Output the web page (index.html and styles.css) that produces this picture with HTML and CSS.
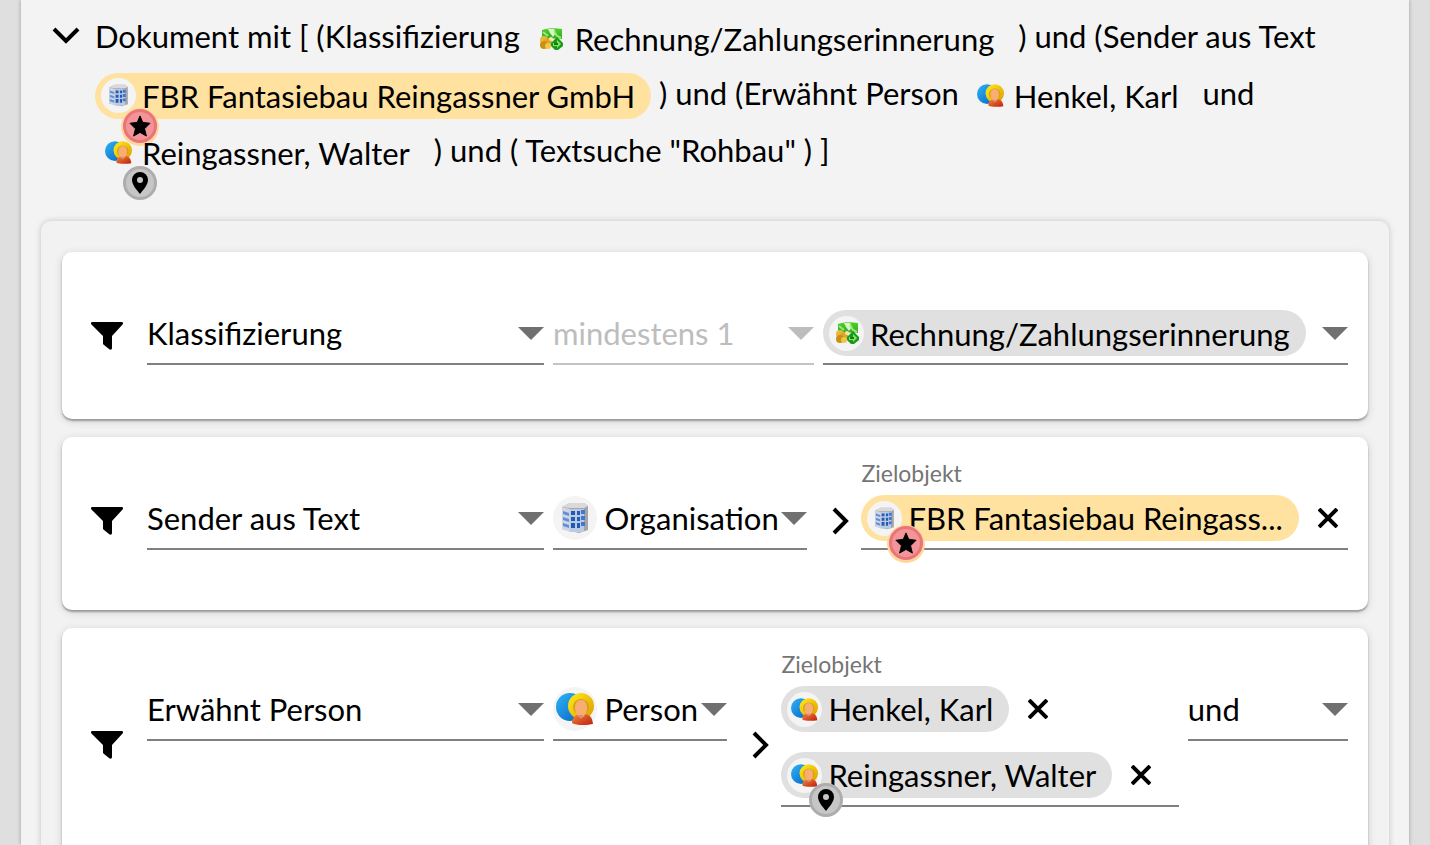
FILE: index.html
```html
<!DOCTYPE html>
<html lang="de">
  <head>
    <meta charset="UTF-8" />
    <meta name="viewport" content="width=device-width, initial-scale=1.0" />
    <title>Dokumentsuche</title>
    <link rel="stylesheet" href="styles.css">
  </head>
  <body>
    <svg class="symbols" aria-hidden="true">
      <defs>
        <linearGradient id="blue" x1="0" y1="0" x2="1" y2="1">
          <stop offset="0" stop-color="#2fb4f5" />
          <stop offset="1" stop-color="#0560c4" />
        </linearGradient>
        <linearGradient id="gold" x1="0" y1="0" x2="1" y2="1">
          <stop offset="0" stop-color="#ffee1c" />
          <stop offset="1" stop-color="#dc9a00" />
        </linearGradient>
        <linearGradient id="red" x1="0" y1="0" x2="1" y2="1">
          <stop offset="0" stop-color="#f08a3c" />
          <stop offset="1" stop-color="#c01c0c" />
        </linearGradient>
        <linearGradient id="green" x1="0" y1="0" x2="0" y2="1">
          <stop offset="0" stop-color="#4fd02c" />
          <stop offset="1" stop-color="#2aa81c" />
        </linearGradient>
      </defs>
      <symbol id="i-person" viewBox="0 0 38 32">
        <circle cx="14" cy="14" r="14" fill="url(#blue)" />
        <circle cx="25" cy="13" r="13" fill="url(#gold)" />
        <circle cx="25" cy="14" r="8" fill="#d9a012" />
        <path d="M16 30c0-5 3-9 10-9s10 2 11 10c-5 1-16 2-21-1z" fill="url(#red)" />
        <path d="M19 15c0-5 2-8 6-8s6 3 6 8c0 4-2 8-6 10-4-2-6-6-6-10z" fill="#f8ae72" />
        <path d="M22 22h5l-2 4z" fill="#c98f86" />
      </symbol>
      <symbol id="i-building" viewBox="0 0 28 32">
        <path d="M1 5l8-4h14l4 3v24l-9 3-17-4z" fill="#a5a5a8" />
        <path d="M1 5l8-4h14l4 3-4 2H9z" fill="#d9d9dc" />
        <path d="M1 5l8 2v23l-8-3z" fill="#cfd6e2" />
        <path d="M9 7h14v23H9z" fill="#bccbe4" />
        <path d="M2 9l6 2v3l-6-2zM2 15l6 2v3l-6-2zM2 21l6 2v3l-6-2z" fill="#5f91d8" />
        <path d="M10 9h4v4h-4zM10 15h4v4h-4zM10 21h4v5h-4zM16 9h3v4h-3zM16 15h3v4h-3zM16 21h3v5h-3z" fill="#2459b4" />
        <path d="M20 8h4v4h-4zM20 14h4v4h-4zM20 20h4v4h-4z" fill="#3e79cf" />
      </symbol>
      <symbol id="i-money" viewBox="0 0 24 22">
        <path d="M3 2c6-2 13-2 20-1v10c-7-1-14 0-20 1z" fill="url(#green)" />
        <path d="M9 1h6l2 4-3 4-3-4z" fill="#dcf5cd" />
        <path d="M15 3l3 5 4 2M4 4l5 4" stroke="#9be878" stroke-width="2" fill="none" />
        <circle cx="5" cy="12" r="4" fill="#e8b83a" />
        <circle cx="9" cy="14" r="4" fill="#dca62a" />
        <circle cx="5" cy="17" r="4" fill="#c98f16" />
        <circle cx="9" cy="18" r="3" fill="#f0c548" />
        <circle cx="12" cy="11" r="2" fill="#f5e6a8" />
        <path d="M18 9l6 6v3l-5 4h-3l-4-4v-3z" fill="#189c17" />
        <path d="M14 15h4v-3l4 4-4 4v-2h-4z" fill="#8ee06a" />
        <path d="M15 16h4" stroke="#0f7d10" stroke-width="2" />
      </symbol>
      <symbol id="i-funnel" viewBox="0 0 32 28">
        <path d="M1 0h30c1 0 1 1 1 2L21 14v12c0 2-2 2-3 1l-5-4c-1-1-1-1-1-2v-7L0 2C0 1 0 0 1 0z" />
      </symbol>
      <symbol id="i-arrow" viewBox="0 0 26 13">
        <path d="M0 0h26L13 13z" fill="currentColor" />
      </symbol>
      <symbol id="i-next" viewBox="0 0 18 28">
        <path d="M2 2l12 12L2 26" fill="none" stroke="#000" stroke-width="4" />
      </symbol>
      <symbol id="i-cross" viewBox="0 0 20 20">
        <path d="M1 1l18 18M19 1L1 19" fill="none" stroke="#000" stroke-width="4" />
      </symbol>
      <symbol id="i-star" viewBox="0 0 24 24">
        <path d="M12 1l3 7 8 1-6 6 2 8-7-4-7 4 2-8-6-6 8-1z" stroke="#000" stroke-linejoin="round" />
      </symbol>
      <symbol id="i-pin" viewBox="0 0 18 22">
        <path fill-rule="evenodd" d="M9 0a8 8 0 0 1 8 8C17 13 12 18 9 22 6 18 1 13 1 8A8 8 0 0 1 9 0zm0 5a3 3 0 1 0 0 6 3 3 0 0 0 0-6z" />
      </symbol>
    </svg>

    <main class="panel">
      <div class="summary">
        <button class="toggle" type="button" aria-label="Einklappen">
          <svg width="28" height="18" viewBox="0 0 28 18"><path d="M2 2l12 12L26 2" fill="none" stroke="#000" stroke-width="4" /></svg>
        </button>
        <p class="query">
          Dokument mit [ (Klassifizierung
          <span class="chip plain"><span class="avatar money"><svg><use href="#i-money" /></svg></span>Rechnung/Zahlungserinnerung</span>
          ) und (Sender aus Text
          <span class="chip org"><span class="avatar"><svg><use href="#i-building" /></svg></span>FBR Fantasiebau Reingassner GmbH<span class="badge star"><svg><use href="#i-star" /></svg></span></span>
          ) und (Erwähnt Person
          <span class="chip plain"><span class="avatar"><svg><use href="#i-person" /></svg></span>Henkel, Karl</span>
          und
          <span class="chip plain"><span class="avatar"><svg><use href="#i-person" /></svg></span>Reingassner, Walter<span class="badge pin"><svg><use href="#i-pin" /></svg></span></span>
          ) und ( Textsuche "Rohbau" ) ]
        </p>
      </div>

      <section class="group">
        <div class="card card-class">
          <svg class="funnel"><use href="#i-funnel" /></svg>
          <label class="field">
            <span class="row">
              <select aria-label="Eigenschaft"><option>Klassifizierung</option></select>
              <svg class="arrow"><use href="#i-arrow" /></svg>
            </span>
          </label>
          <label class="field disabled">
            <span class="row">
              <select aria-label="Anzahl" disabled><option>mindestens 1</option></select>
              <svg class="arrow"><use href="#i-arrow" /></svg>
            </span>
          </label>
          <label class="field">
            <span class="row">
              <span class="chip"><span class="avatar money"><svg><use href="#i-money" /></svg></span><select aria-label="Klasse"><option>Rechnung/Zahlungserinnerung</option></select></span>
              <svg class="arrow"><use href="#i-arrow" /></svg>
            </span>
          </label>
        </div>

        <div class="card card-sender">
          <svg class="funnel"><use href="#i-funnel" /></svg>
          <label class="field">
            <span class="row">
              <select aria-label="Eigenschaft"><option>Sender aus Text</option></select>
              <svg class="arrow"><use href="#i-arrow" /></svg>
            </span>
          </label>
          <label class="field">
            <span class="row">
              <span class="avatar large"><svg><use href="#i-building" /></svg></span>
              <select aria-label="Typ"><option>Organisation</option></select>
              <svg class="arrow"><use href="#i-arrow" /></svg>
            </span>
          </label>
          <svg class="next"><use href="#i-next" /></svg>
          <div class="field target">
            <span class="caption">Zielobjekt</span>
            <div class="row">
              <span class="chip org"><span class="avatar"><svg><use href="#i-building" /></svg></span>FBR Fantasiebau Reingass...<span class="badge star"><svg><use href="#i-star" /></svg></span></span>
              <button class="remove" type="button" aria-label="Entfernen"><svg><use href="#i-cross" /></svg></button>
            </div>
          </div>
        </div>

        <div class="card card-person">
          <svg class="funnel"><use href="#i-funnel" /></svg>
          <label class="field">
            <span class="row">
              <select aria-label="Eigenschaft"><option>Erwähnt Person</option></select>
              <svg class="arrow"><use href="#i-arrow" /></svg>
            </span>
          </label>
          <label class="field">
            <span class="row">
              <span class="avatar large"><svg><use href="#i-person" /></svg></span>
              <select aria-label="Typ"><option>Person</option></select>
              <svg class="arrow"><use href="#i-arrow" /></svg>
            </span>
          </label>
          <svg class="next"><use href="#i-next" /></svg>
          <div class="field target">
            <span class="caption">Zielobjekt</span>
            <div class="row">
              <span class="chip"><span class="avatar"><svg><use href="#i-person" /></svg></span>Henkel, Karl</span>
              <button class="remove" type="button" aria-label="Entfernen"><svg><use href="#i-cross" /></svg></button>
            </div>
            <div class="row">
              <span class="chip"><span class="avatar"><svg><use href="#i-person" /></svg></span>Reingassner, Walter<span class="badge pin"><svg><use href="#i-pin" /></svg></span></span>
              <button class="remove" type="button" aria-label="Entfernen"><svg><use href="#i-cross" /></svg></button>
            </div>
          </div>
          <label class="field">
            <span class="row">
              <select aria-label="Verknüpfung"><option>und</option></select>
              <svg class="arrow"><use href="#i-arrow" /></svg>
            </span>
          </label>
        </div>
      </section>
    </main>
  </body>
</html>
```
FILE: styles.css
```css
* {
  box-sizing: border-box;
}
body {
  margin: 0;
  background-color: #dfdfdf;
  color: #000;
  font-family: Lato, sans-serif;
  font-size: 31px;
}
.symbols {
  position: absolute;
  width: 0;
  height: 0;
}
.panel {
  height: 100vh;
  overflow: hidden;
  margin: 0 21px;
  padding: 8px 20px 0;
  background-color: #f3f3f3;
  box-shadow: 0 0 4px rgba(0, 0, 0, 0.3);
}
.summary {
  display: flex;
  align-items: flex-start;
  gap: 15px;
  padding: 0 20px 42px 11px;
}
.query {
  margin: 0;
  line-height: 57px;
}
button {
  display: flex;
  padding: 0;
  border: none;
  background: none;
  cursor: pointer;
}
.toggle {
  padding-top: 19px;
}

/* chips */
.chip {
  position: relative;
  display: inline-flex;
  align-items: center;
  height: 46px;
  padding: 0 16px 0 6px;
  border-radius: 23px;
  background-color: #e0e0e0;
  line-height: 46px;
  white-space: nowrap;
  vertical-align: -2px;
}
.chip.plain {
  background-color: transparent;
}
.chip.org {
  background-color: #ffe2a0;
}
.avatar {
  display: flex;
  flex: none;
  align-items: center;
  justify-content: center;
  width: 35px;
  height: 35px;
  margin-right: 6px;
  border-radius: 50%;
  background-color: #f4f4f4;
}
.plain .avatar {
  background-color: transparent;
}
.avatar svg {
  width: 27px;
  height: 23px;
}
.avatar.money svg {
  width: 24px;
  height: 22px;
}
.avatar.large {
  width: 44px;
  height: 44px;
  margin-right: 7px;
}
.avatar.large svg {
  width: 38px;
  height: 32px;
}
.badge {
  position: absolute;
  top: 31px;
  left: 28px;
  display: flex;
  align-items: center;
  justify-content: center;
  width: 34px;
  height: 34px;
  border: 3px solid #adadad;
  border-radius: 50%;
  background-color: #c6c6c6;
}
.query .badge {
  top: 36px;
}
.badge.star {
  border-color: #e9747a;
  background-color: #f29498;
  box-shadow: 0 1px 0 2px #ffd79a;
}
.badge.star svg {
  width: 22px;
  height: 22px;
}
.badge.pin svg {
  width: 18px;
  height: 22px;
}

/* filter cards */
.group {
  display: grid;
  gap: 18px;
  padding: 31px 21px;
  border-radius: 10px;
  background-color: #f2f2f2;
  box-shadow: 0 0 6px rgba(0, 0, 0, 0.2);
}
.card {
  display: grid;
  column-gap: 9px;
  align-items: start;
  padding: 0 20px 0 29px;
  border-radius: 10px;
  background-color: #fff;
  box-shadow: 0 2px 2px rgba(0, 0, 0, 0.3), 0 2px 8px rgba(0, 0, 0, 0.15);
}
.card-class {
  grid-template-columns: 47px 397fr 261fr 525fr;
}
.card-sender {
  grid-template-columns: 47px 397fr 254px 36px 486fr;
  padding-bottom: 6px;
}
.card-person {
  grid-template-columns: 47px 397fr 174px 36px 397fr 160fr;
  padding-bottom: 6px;
}
.funnel {
  align-self: center;
  width: 32px;
  height: 28px;
}
.next {
  align-self: center;
  justify-self: center;
  width: 18px;
  height: 28px;
  margin-left: 14px;
}
.field {
  min-width: 0;
  margin: 24px 0 54px;
  padding: 34px 0 7px;
  border-bottom: 2px solid #808080;
}
.field.target {
  padding-top: 0;
}
.field.disabled {
  border-color: #c4c4c4;
}
.caption {
  display: block;
  height: 34px;
  color: #757575;
  font-size: 23px;
  line-height: 25px;
}
.row {
  display: flex;
  align-items: center;
  height: 46px;
}
.row + .row {
  margin-top: 20px;
}
select {
  flex: 1;
  min-width: 0;
  height: 44px;
  padding: 0;
  border: none;
  background: none;
  color: inherit;
  font: inherit;
  appearance: none;
  cursor: pointer;
}
select:disabled {
  color: #bdbdbd;
  opacity: 1;
}
.arrow {
  flex: none;
  width: 26px;
  height: 13px;
  margin-left: auto;
  color: #707070;
}
.disabled .arrow {
  color: #bdbdbd;
}
.remove {
  margin-left: 19px;
}
.remove svg {
  width: 20px;
  height: 20px;
}
```
